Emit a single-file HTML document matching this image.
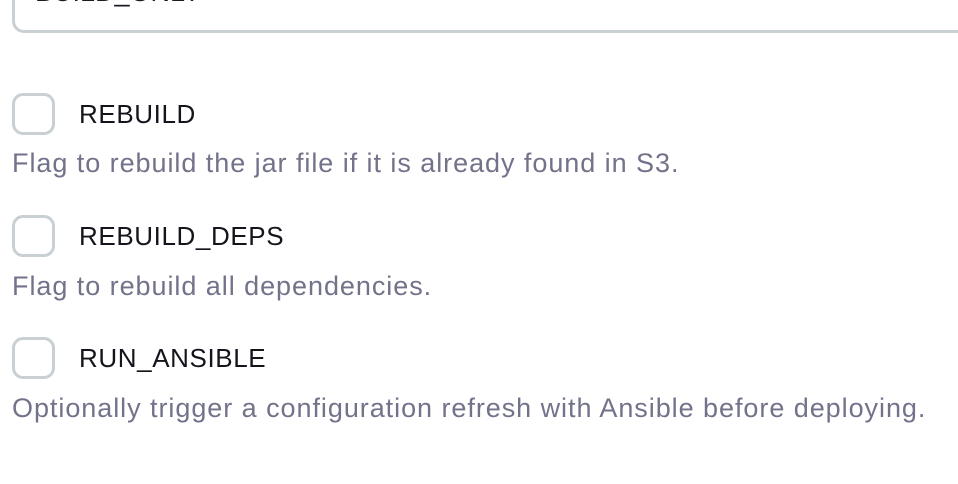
<!DOCTYPE html>
<html><head><style>
body{margin:0;width:958px;height:484px;overflow:hidden;background:#fff;font-family:"Liberation Sans",sans-serif;position:relative}
.inp{position:absolute;left:12px;top:-40px;width:980px;height:73px;border:3px solid #c9d0d4;border-radius:12px;box-sizing:border-box}
.inp span{position:absolute;left:20px;top:14px;font-size:27px;color:#1a1a22}
.cb{position:absolute;left:12px;width:43px;height:42px;border:3px solid #c9d0d4;border-radius:11px;box-sizing:border-box}
.lb{position:absolute;left:79px;font-size:26px;color:#14141c;letter-spacing:0.6px}
.ds{position:absolute;left:12px;font-size:27px;color:#72728a;letter-spacing:0.95px;white-space:nowrap}
</style></head><body>
<div class="inp"><span>BUILD_ONLY</span></div>
<div class="cb" style="top:93px"></div><div class="lb" style="top:99px">REBUILD</div>
<div class="ds" style="top:148px">Flag to rebuild the jar file if it is already found in S3.</div>
<div class="cb" style="top:215px"></div><div class="lb" style="top:221px">REBUILD_DEPS</div>
<div class="ds" style="top:271px">Flag to rebuild all dependencies.</div>
<div class="cb" style="top:337px"></div><div class="lb" style="top:343px">RUN_ANSIBLE</div>
<div class="ds" style="top:393px">Optionally trigger a configuration refresh with Ansible before deploying.</div>
</body></html>
